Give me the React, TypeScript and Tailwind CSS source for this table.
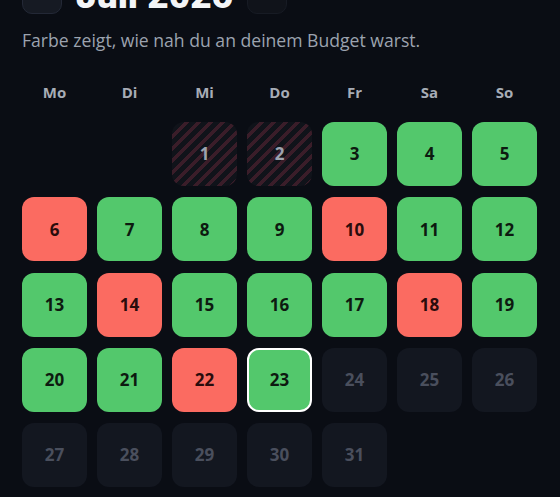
import React from "react";

type Kind = "empty" | "striped" | "green" | "red" | "today" | "future";

const days: { d?: number; k: Kind }[] = [
  { k: "empty" },
  { k: "empty" },
  { d: 1, k: "striped" },
  { d: 2, k: "striped" },
  { d: 3, k: "green" },
  { d: 4, k: "green" },
  { d: 5, k: "green" },
  { d: 6, k: "red" },
  { d: 7, k: "green" },
  { d: 8, k: "green" },
  { d: 9, k: "green" },
  { d: 10, k: "red" },
  { d: 11, k: "green" },
  { d: 12, k: "green" },
  { d: 13, k: "green" },
  { d: 14, k: "red" },
  { d: 15, k: "green" },
  { d: 16, k: "green" },
  { d: 17, k: "green" },
  { d: 18, k: "red" },
  { d: 19, k: "green" },
  { d: 20, k: "green" },
  { d: 21, k: "green" },
  { d: 22, k: "red" },
  { d: 23, k: "today" },
  { d: 24, k: "future" },
  { d: 25, k: "future" },
  { d: 26, k: "future" },
  { d: 27, k: "future" },
  { d: 28, k: "future" },
  { d: 29, k: "future" },
  { d: 30, k: "future" },
  { d: 31, k: "future" },
];

const cls: Record<Kind, string> = {
  empty: "",
  striped:
    "bg-[repeating-linear-gradient(135deg,#3a1d29_0px,#3a1d29_4px,#10131a_4px,#10131a_8.5px)] text-[#9ca3af]",
  green: "bg-[#53c86c] text-[#0d1a10]",
  red: "bg-[#fb6b61] text-[#2a0c0c]",
  today: "bg-[#53c86c] text-[#0d1a10] border-2 border-white",
  future: "bg-[#131720] text-[#4a4f5d]",
};

export default function App() {
  return (
    <div
      className="w-[560px] h-[497px] overflow-hidden bg-[#0a0d14] pl-[22px] pr-[23px]"
      style={{ fontFamily: "'Open Sans', 'Noto Sans', sans-serif" }}
    >
      <div className="flex items-center gap-[14px] mt-[-26px] h-[40px]">
        <div className="w-[40px] h-[40px] rounded-[10px] bg-[#161a23] border border-[#232836]" />
        <div
          className="text-[37px] leading-[40px] font-black text-[#f3f4f6] mt-[3px]"
          style={{ fontFamily: "Roboto, sans-serif" }}
        >
          Juli 2026
        </div>
        <div className="w-[40px] h-[40px] rounded-[10px] bg-[#10131a] border border-[#171b24]" />
      </div>
      <p className="mt-[14px] text-[17.6px] leading-[24px] text-[#9ca3af]">
        Farbe zeigt, wie nah du an deinem Budget warst.
      </p>
      <div className="grid grid-cols-7 gap-x-[10px] mt-[30px]">
        {["Mo", "Di", "Mi", "Do", "Fr", "Sa", "So"].map((w) => (
          <div key={w} className="text-center text-[15px] leading-[20px] font-bold text-[#a7acb6]">
            {w}
          </div>
        ))}
      </div>
      <div className="grid grid-cols-7 gap-x-[10px] gap-y-[11.25px] mt-[20px]">
        {days.map((c, i) =>
          c.k === "empty" ? (
            <div key={i} className="h-[64px]" />
          ) : (
            <div
              key={i}
              className={`h-[64px] rounded-[12px] flex items-center justify-center text-[17px] font-bold ${cls[c.k]}`}
            >
              {c.d}
            </div>
          )
        )}
      </div>
    </div>
  );
}
